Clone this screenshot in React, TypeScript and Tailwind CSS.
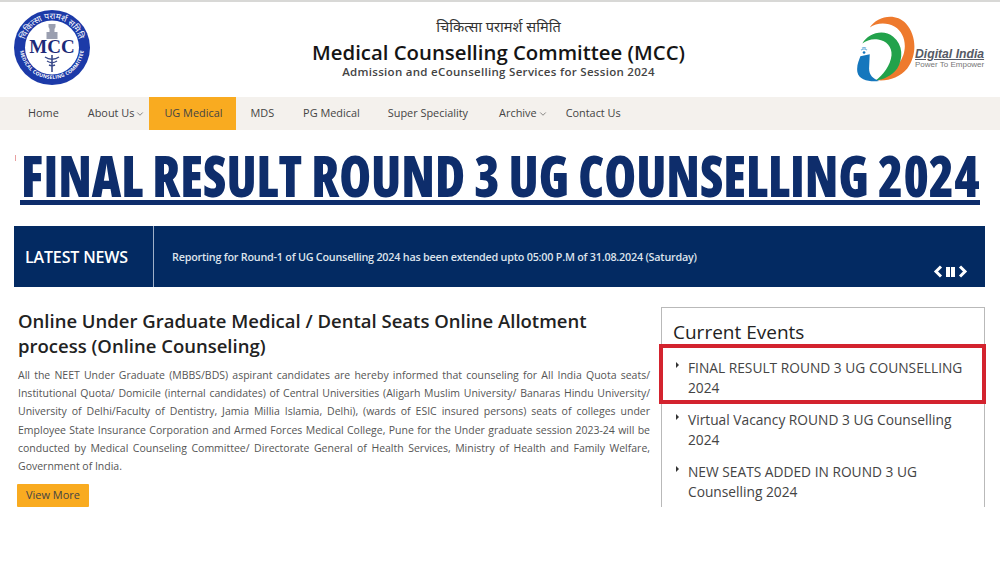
import React from "react";
import { ChevronDown } from "lucide-react";

const sans = "font-['Open_Sans',sans-serif]";

const MccLogo = () => (
	<svg width="76" height="75" viewBox="0 0 76 75" className="shrink-0">
		<defs>
			<path id="topArc" d="M 10 37 A 28 28 0 0 1 66 37" />
			<path id="bottomArc" d="M 6 37 A 32 32 0 0 0 70 37" />
		</defs>
		<ellipse cx="38" cy="37.5" rx="38" ry="37.5" fill="#1c3aa8" />
		<ellipse cx="38" cy="37.5" rx="27" ry="27" fill="#ffffff" />
		<text fontSize="8.5" fill="#ffffff" fontFamily="Noto Sans, sans-serif">
			<textPath href="#topArc" startOffset="50%" textAnchor="middle">चिकित्सा परामर्श समिति</textPath>
		</text>
		<text fontSize="5" fontWeight="700" fill="#ffffff" fontFamily="Open Sans, sans-serif" letterSpacing="0.2">
			<textPath href="#bottomArc" startOffset="50%" textAnchor="middle">MEDICAL COUNSELING COMMITTEE</textPath>
		</text>
		<path d="M34.5 14h7v3l-1 2v3h3v7H32.500v-7h3v-3l-1-2z" fill="#9a9fb0" />
		<text x="38" y="43" textAnchor="middle" fontSize="19" fontWeight="700" fill="#1c2a78" fontFamily="Liberation Serif, serif">MCC</text>
		<path d="M38 45v17" stroke="#3a4a8a" strokeWidth="1.6" />
		<path d="M31 47c4 3 10 3 14 0M33 51c3 2 7 2 10 0M35 55c2 1 4 1 6 0" stroke="#3a4a8a" strokeWidth="1.4" fill="none" />
	</svg>
);

const DigitalIndiaLogo = () => (
	<div className="flex shrink-0 w-[128px] h-[67px]">
		<svg width="58" height="67" viewBox="112 45 173 200" className="shrink-0">
			<path d="M150 82C170 50 225 35 258 70C290 105 292 165 262 205C240 232 205 243 172 240C205 230 235 205 250 165C262 130 250 95 225 80C200 65 170 68 150 82Z" fill="#ee7a2d" />
			<path d="M128 130C145 100 190 85 220 110C250 135 250 175 232 205C215 228 190 238 165 242C190 225 212 195 215 165C217 140 200 122 175 118C158 115 140 120 128 130Z" fill="#22a24b" />
			<path d="M122 168L150 162L148 205C148 225 160 236 178 242C150 245 118 240 113 215C110 195 118 180 122 168Z" fill="#1577bd" />
			<circle cx="133" cy="157" r="4" fill="#1577bd" />
			<path d="M124 150c6-5 12-5 18 0M127 144c4-3 8-3 12 0" stroke="#6fb0dc" strokeWidth="3" fill="none" />
		</svg>
		<div className="flex flex-col pt-[33px] font-['Liberation_Sans',sans-serif] leading-none whitespace-nowrap">
			<span className="text-[12.2px] font-bold italic text-[#555a66] underline">Digital India</span>
			<span className="text-[8px] text-[#777] mt-[1px]">Power To Empower</span>
		</div>
	</div>
);

const navItems = [
	{ label: "Home", cls: "ml-[28px]" },
	{ label: "About Us", cls: "ml-[29px]", caret: true },
	{ label: "UG Medical", cls: "ml-[4px] pl-[15px] pr-[14px] bg-[#f9ab20]" },
	{ label: "MDS", cls: "ml-[14px]" },
	{ label: "PG Medical", cls: "ml-[29px]" },
	{ label: "Super Speciality", cls: "ml-[28px]" },
	{ label: "Archive", cls: "ml-[31px]", caret: true },
	{ label: "Contact Us", cls: "ml-[18px]" },
];

const events = [
	"FINAL RESULT ROUND 3 UG COUNSELLING 2024",
	"Virtual Vacancy ROUND 3 UG Counselling 2024",
	"NEW SEATS ADDED IN ROUND 3 UG Counselling 2024",
];

export default function App() {
	return (
		<div className={`relative w-[1000px] h-[563px] overflow-hidden bg-white ${sans}`}>
			<div className="h-[2px] bg-[#d8d8d6]" />
			<header className="h-[95px] flex items-start justify-between">
				<div className="ml-[14px] mt-[8px]">
					<MccLogo />
				</div>
				<div className="flex flex-col items-center mt-[16px] ml-[50px]">
					<div className="text-[14.6px] leading-[21px] text-[#333] font-['Noto_Sans_Devanagari','Noto_Sans',sans-serif]">
						चिकित्सा परामर्श समिति
					</div>
					<div className="text-[20.35px] leading-[26px] font-semibold text-[#151515] whitespace-nowrap">
						Medical Counselling Committee (MCC)
					</div>
					<div className="text-[11.5px] leading-[14px] font-semibold text-[#444] tracking-[0.3px] whitespace-nowrap">
						Admission and eCounselling Services for Session 2024
					</div>
				</div>
				<div className="mt-[13px] mr-[15px]">
					<DigitalIndiaLogo />
				</div>
			</header>

			<nav className="h-[33px] bg-[#f4f1ed] flex items-stretch text-[10.9px] font-medium text-[#444]">
				{navItems.map((item) => (
					<div key={item.label} className={`${item.cls} flex items-center whitespace-nowrap`}>
						{item.label}
						{item.caret && <ChevronDown size={10} strokeWidth={1.5} className="ml-[1px]" />}
					</div>
				))}
			</nav>

			<div className="absolute left-[15px] top-[155px] w-[1px] h-[6px] bg-[#e8a0a0]" />
			<h1 className="mt-[20px] ml-[20px] w-[960px] h-[55px] border-b-[5px] border-[#0e2d6b] overflow-visible">
				<span className="inline-block origin-left scale-x-[0.917] ml-[1px] text-[56px] leading-[50px] font-extrabold text-[#0e2d6b] whitespace-nowrap [font-stretch:75%]">
					FINAL RESULT ROUND 3 UG COUNSELLING 2024
				</span>
			</h1>

			<section className="mt-[21px] ml-[14px] w-[971px] h-[61px] bg-[#032a62] flex text-white">
				<div className="w-[140px] border-r border-[#9fb0c9] flex items-center pl-[11px] text-[16px] font-semibold tracking-[-0.15px]">
					LATEST NEWS
				</div>
				<div className="relative flex-1 pl-[18px] pt-[23px] text-[10.8px] leading-[15px] font-semibold text-[#dde3ec] tracking-[-0.23px]">
					Reporting for Round-1 of UG Counselling 2024 has been extended upto 05:00 P.M of 31.08.2024 (Saturday)
					<div className="absolute right-[17px] bottom-[9px] flex items-center gap-[3px]">
						<svg width="10" height="13" viewBox="0 0 10 13">
							<path d="M8 1.500 3 6.500l5 5" stroke="#fff" strokeWidth="3" fill="none" />
						</svg>
						<div className="flex gap-[1px]">
							<span className="w-[4px] h-[10px] bg-white" />
							<span className="w-[4px] h-[10px] bg-white" />
						</div>
						<svg width="10" height="13" viewBox="0 0 10 13">
							<path d="M2 1.500 7 6.500l-5 5" stroke="#fff" strokeWidth="3" fill="none" />
						</svg>
					</div>
				</div>
			</section>

			<main className="mt-[20px] h-[200px] overflow-hidden flex items-start">
				<div className="ml-[18px] w-[632px] shrink-0">
					<h2 className="mt-[1px] text-[18.5px] leading-[25px] font-semibold text-[#222]">
						Online Under Graduate Medical / Dental Seats Online Allotment process (Online Counseling)
					</h2>
					<p className="mt-[8px] text-[10.5px] leading-[18.2px] text-[#555] text-justify">
						All the NEET Under Graduate (MBBS/BDS) aspirant candidates are hereby informed that counseling for All India Quota seats/ Institutional Quota/ Domicile (internal candidates) of Central Universities (Aligarh Muslim University/ Banaras Hindu University/ University of Delhi/Faculty of Dentistry, Jamia Millia Islamia, Delhi), (wards of ESIC insured persons) seats of colleges under Employee State Insurance Corporation and Armed Forces Medical College, Pune for the Under graduate session 2023-24 will be conducted by Medical Counseling Committee/ Directorate General of Health Services, Ministry of Health and Family Welfare, Government of India.
					</p>
					<button className="mt-[9px] -ml-[1px] w-[72px] h-[23px] bg-[#f9ab20] rounded-[1px] text-[11px] text-[#444]">View More</button>
				</div>
				<aside className="ml-[11px] w-[324px] h-[210px] shrink-0 border border-[#b9b9b9] pt-[12px] pl-[11px] pr-[8px]">
					<h3 className="text-[19px] leading-[24px] font-medium text-[#222]">Current Events</h3>
					<ul className="mt-[14px] flex flex-col gap-[13px] text-[13.75px] leading-[19.5px] text-[#444]">
						{events.map((text) => (
							<li key={text} className="relative pl-[15px]">
								<span className="absolute left-[3px] top-[4px] w-0 h-0 border-y-[3px] border-y-transparent border-l-[3px] border-l-[#333]" />
								{text}
							</li>
						))}
					</ul>
				</aside>
			</main>

			<div className="absolute left-[659px] top-[344px] w-[327px] h-[60px] border-4 border-[#d3232e] pointer-events-none" />
		</div>
	);
}
